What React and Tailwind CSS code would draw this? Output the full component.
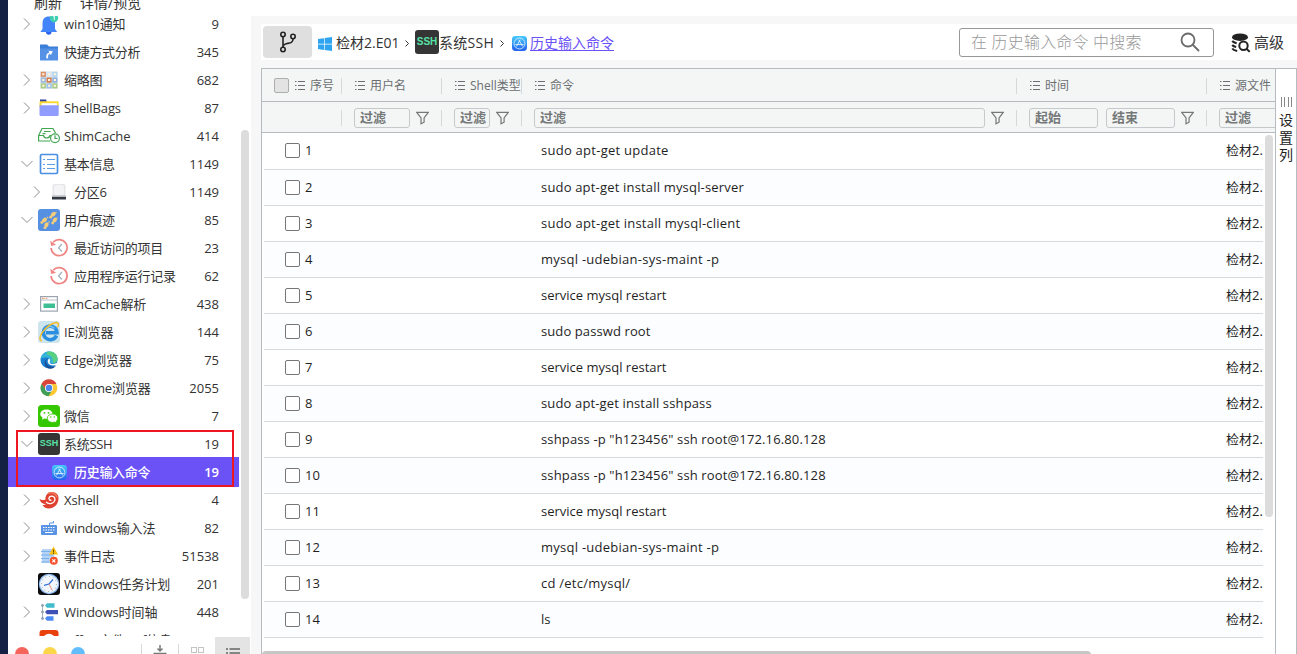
import React from 'react';

const SSH = ({ className }) => (
  <span className={"flex items-center justify-center rounded-[3px] bg-[#353535] pb-px font-['Liberation_Sans',sans-serif] font-bold text-[#57e3a6] " + className}>SSH</span>
);

const Svg = ({ s = 22, children }) => (
  <svg width={s} height={s} viewBox="0 0 22 22" fill="none">{children}</svg>
);

const AppStore = ({ s }) => (
  <Svg s={s}>
    <defs>
      <linearGradient id="store" x1="0" y1="0" x2="0" y2="1">
        <stop offset="0" stopColor="#45cbfa" />
        <stop offset="1" stopColor="#2560ee" />
      </linearGradient>
    </defs>
    <rect width="22" height="22" rx="5" fill="url(#store)" />
    <circle cx="11" cy="11" r="8" stroke="#e4f4ff" strokeWidth="1.200" />
    <path d="M11.8 6L7 14.5M10.2 6l5 8.5M5.5 12.5h11" stroke="#e4f4ff" strokeWidth="1.300" strokeLinecap="round" />
  </Svg>
);

const icons = {
  bell: (
    <Svg>
      <path d="M4.500 16V10.500C4.500 6 7 3.500 10.500 3.500s6.500 2.500 6.500 7V16l2.200 3H2.300z" fill="#4285fb" />
      <path d="M8 19h5.500a2.700 2.700 0 0 1-5.500 0z" fill="#2e62f4" />
      <circle cx="16" cy="5" r="4.200" fill="#3fcfb0" />
      <path d="M15.300 3.800l1-.8v4" stroke="#fff" strokeWidth=".9" />
    </Svg>
  ),
  shortcut: (
    <Svg>
      <path d="M2 3.500h7l2 2h9v3H2z" fill="#3c7fd8" />
      <rect x="2" y="7.500" width="18" height="12" fill="#5591e5" />
      <path d="M8.500 17.500c-.8-3.500.5-5.500 2.800-5.800l-.8-2 4.300.6-2 4-.7-1.500c-1.800.5-2.500 2.200-1.800 4.500z" fill="#fff" />
    </Svg>
  ),
  thumbs: (
    <Svg>
      <rect x="2.500" y="2.500" width="17" height="17" fill="#dbe7f0" />
      {[['#d98f68', '#d8e6f3', '#b5d5f0'], ['#9db8dd', '#d07d51', '#8fb0df'], ['#a9cc88', '#9fc0e8', '#a9cc88']].map((r, y) =>
        r.map((c, x) => (
          <g key={x + '-' + y}>
            <rect x={2.7 + x * 5.8} y={2.7 + y * 5.8} width="5.200" height="5.200" fill={c} />
            <rect x={4.2 + x * 5.8} y={4.2 + y * 5.8} width="2.200" height="2" fill="#fff3da" />
          </g>
        ))
      )}
    </Svg>
  ),
  folder: (
    <Svg>
      <path d="M2 2.500h6l1 2.500H2z" fill="#2f3f9e" />
      <rect x="1.500" y="4.200" width="19" height="6" rx="1" fill="#fdd835" />
      <path d="M3.500 6.200h15.500v3H3.500z" fill="#fff" />
      <path d="M1.500 8.200h19.200v9.300a1.500 1.500 0 0 1-1.500 1.500H3a1.500 1.500 0 0 1-1.500-1.500z" fill="#919cff" />
    </Svg>
  ),
  shim: (
    <Svg>
      <path d="M.6 10.500L4 3.500h11l2.500 4.500M.6 10.500v5.500h11.500M.6 10.500H5.500c.5 2 1.500 2.500 3 2.500 1.800 0 3-.5 3.500-2.500h1M6 6.500h6.500M4.500 8.700h3" stroke="#43a653" strokeWidth="1.200" />
      <circle cx="17" cy="13.200" r="4.400" stroke="#43a653" strokeWidth="1.200" />
      <path d="M17 10.200v3.300h2.500" stroke="#43a653" strokeWidth="1.200" />
    </Svg>
  ),
  info: (
    <Svg>
      <rect x="2.500" y="1.500" width="17" height="19" rx="1.200" fill="#fff" stroke="#4a90e2" strokeWidth="1.700" />
      <path d="M5 6.500h2M5 11.500h2M5 15.500h2M9 6.500h8M9 11.500h8M9 15.500h8" stroke="#5c9ee8" strokeWidth="1.100" />
    </Svg>
  ),
  disk: (
    <Svg>
      <rect x="4.500" y="3" width="13" height="14" rx="2" fill="#e6e6e9" />
      <rect x="6" y="4" width="10" height="10" rx="2" fill="#f4f4f6" />
      <path d="M4 15h14v3.500H4z" fill="#333841" />
      <path d="M4 14.500h14v1.500H4z" fill="#b6b8bd" />
    </Svg>
  ),
  feet: (
    <Svg>
      <rect width="22" height="22" rx="3" fill="#5590e3" />
      <g fill="#f5cd79">
        <ellipse cx="6.500" cy="11" rx="2.800" ry="2.100" transform="rotate(-40 6.500 11)" />
        <ellipse cx="3.800" cy="13.500" rx="1.500" ry="1.300" />
        <ellipse cx="8.500" cy="15.800" rx="2.600" ry="2" transform="rotate(-60 8.500 15.800)" />
        <ellipse cx="7" cy="18.700" rx="1.600" ry="1.300" />
        <ellipse cx="15.300" cy="5.200" rx="2.800" ry="2" transform="rotate(-40 15.300 5.200)" />
        <ellipse cx="12.700" cy="8" rx="1.500" ry="1.500" />
        <ellipse cx="16.800" cy="11" rx="2.600" ry="1.900" transform="rotate(-50 16.800 11)" />
        <ellipse cx="14.700" cy="14" rx="1.400" ry="1.400" />
        <circle cx="9.500" cy="8.500" r=".8" /><circle cx="11" cy="13" r=".8" /><circle cx="18" cy="3.500" r=".7" /><circle cx="19" cy="9" r=".7" />
      </g>
    </Svg>
  ),
  clock: (
    <Svg>
      <path d="M5.200 5.200A8 8 0 1 1 3.100 11" stroke="#ee8583" strokeWidth="1.700" />
      <path d="M2.200 3.800l1 5.200 4.800-1.200z" fill="#ee8583" />
      <path d="M13.800 7l-3.300 4 3.500 3.500" stroke="#9fb2bd" strokeWidth="1.200" />
    </Svg>
  ),
  window: (
    <Svg>
      <rect x="2.600" y="3.600" width="16.800" height="14.500" fill="#fff" stroke="#9aa5b0" strokeWidth="1.200" />
      <path d="M3 7h16" stroke="#b6bec6" />
      <path d="M4 5.300h1.500" stroke="#ef6c5b" /><path d="M6 5.300h1.500" stroke="#f7b84a" /><path d="M8 5.300h1.500" stroke="#f1a097" />
      <rect x="5.500" y="10.500" width="11.500" height="4.500" fill="#3ebf93" />
    </Svg>
  ),
  ie: (
    <Svg>
      <rect width="22" height="22" rx="3" fill="#cfe5ee" />
      <path d="M18.500 14.500A6.800 6.800 0 1 1 19 11.800H8" stroke="#2b8ede" strokeWidth="3.600" />
      <path d="M7 9.500a5.500 5.500 0 0 1 9.500-2" stroke="#6ec3f3" strokeWidth="1.500" />
      <path d="M4 20C.2 19.500 2 13 7.500 7.500 12 3 18.500.3 20 2.300c.8 1 .3 2.500-.5 4" stroke="#f4bd2d" strokeWidth="1.500" />
    </Svg>
  ),
  edge: (
    <Svg>
      <circle cx="11" cy="11" r="8.500" fill="#1b7fd0" />
      <path d="M2.500 10C3.500 5 7 2.500 11 2.500c5 0 8.500 3.500 8.500 7.500 0 3-2.500 4.500-5 4.500-2 0-3-1-2.500-2 .8-2-1-4-3.500-4S3.500 9 2.500 10z" fill="#35b4d6" />
      <path d="M12 2.500c4.500 0 7.500 3.500 7.500 7 0 2.500-2 4.500-4.500 4.500 0-5-1.500-8-7-9 1-1.500 2.500-2.500 4-2.500z" fill="#59cf82" />
      <path d="M9 9.500c-2.500 3 0 8.500 5.500 8 2 0 3-.5 4-1.500-2 3.500-5.500 4.500-9 3-3.500-2-4-7-.5-9.500z" fill="#174f9b" />
      <path d="M11 9.500c1.500 1 1 2 .8 3-.5 1.300.8 2.700 3 2.500 2 0 3.500-.8 4.500-1.500l-.5 2c-3 2-8.500 1-9-2.500-.1-1.500.3-2.800 1.200-3.500z" fill="#fff" />
    </Svg>
  ),
  chrome: (
    <Svg>
      <circle cx="11" cy="11" r="8.300" fill="#fbc834" />
      <path d="M3.500 7A8.300 8.300 0 0 1 18.500 7H11L8 13z" fill="#d8453a" />
      <path d="M3.500 7A8.300 8.300 0 0 0 10.500 19.300L14 13.500 8 13z" fill="#3f9d58" />
      <circle cx="11" cy="11" r="4" fill="#fff" /><circle cx="11" cy="11" r="3.200" fill="#4a86ee" />
    </Svg>
  ),
  wechat: (
    <Svg>
      <rect width="22" height="22" rx="3.500" fill="#35c700" />
      <path d="M8.500 4.500c3.500 0 6 2 6 4.700s-2.500 4.600-6 4.600c-.8 0-1.500-.1-2.200-.3L4 14.700l.6-2.200C3.100 11.500 2.300 10.500 2.300 9.200c0-2.700 2.700-4.700 6.200-4.700z" fill="#fff" />
      <path d="M14.500 9c3 0 5.300 1.800 5.300 4.200 0 1.200-.6 2.200-1.600 3l.5 1.900-2-1c-.7.200-1.400.3-2.200.3-3 0-5.200-1.800-5.200-4.200S11.500 9 14.500 9z" fill="#fff" stroke="#35c700" strokeWidth=".8" />
      <g fill="#35c700"><circle cx="6.500" cy="7.800" r=".9" /><circle cx="10.500" cy="7.800" r=".9" /><circle cx="12.800" cy="12" r=".7" /><circle cx="16.300" cy="12" r=".7" /></g>
    </Svg>
  ),
  ssh: <SSH className="h-[22px] w-[22px] text-[9px]" />,
  store: <AppStore s={15} />,
  xshell: (
    <Svg>
      <path d="M1.500 10c2 1.500 4 1.200 6 .5C7 6.500 10 3 14 3c4 0 7 3 6.500 7-.5 6-5 9.500-9.500 9.500-3 0-5-1-6.500-3.500 1.500.3 2.500 0 3.500-.7C4.500 15 2 13 1.500 10z" fill="#e0402f" />
      <path d="M8 13c3 3 8.500 1.500 9-2.500.2-3-3.500-4.500-5.500-2.500-1.500 1.800.3 4 2 3" stroke="#fff" strokeWidth="1.300" />
      <path d="M10 4.500c4-2 8 0 9 4" stroke="#f1795a" strokeWidth="1.500" />
    </Svg>
  ),
  keyboard: (
    <Svg>
      <rect x="3" y="8" width="16" height="10" rx="1" fill="#5893e4" />
      <path d="M11.500 8V6h4V4" stroke="#5893e4" />
      <path d="M5 10.500h12.500M5 13h12.500" stroke="#fff" strokeDasharray="1.500 1" /><path d="M7 15.500h8" stroke="#fff" />
    </Svg>
  ),
  events: (
    <Svg>
      <path d="M4 4h12v14H4z" fill="#b4d3f6" />
      <path d="M3 6.500h10M3 10h12M3 13.500h8M3 17h8" stroke="#72abea" strokeWidth=".9" />
      <path d="M15.500 1.500l4.500 8h-9z" fill="#fbbf12" /><path d="M15.500 4.500v3M15.500 8v1" stroke="#6b4c00" />
      <circle cx="15.800" cy="15.800" r="4" fill="#f4512c" /><path d="M14.300 14.300l3 3m0-3l-3 3" stroke="#fff" strokeWidth="1.200" />
    </Svg>
  ),
  task: (
    <Svg>
      <rect width="22" height="22" rx="3" fill="#0b0c10" />
      <circle cx="11" cy="11" r="9.600" fill="#f1f6fc" stroke="#8fbcf4" strokeWidth="1.200" />
      <circle cx="11" cy="11" r="7.500" stroke="#8d9fb7" strokeDasharray="1 2.900" />
      <path d="M6 12.300L11 11l4-4.500" stroke="#2f6fd6" strokeWidth="1.200" /><path d="M11 11l3 6" stroke="#e5745c" strokeWidth=".8" />
    </Svg>
  ),
  timeline: (
    <Svg>
      <path d="M4.500 4v14" stroke="#a7b4c2" />
      <g fill="#8fa1b3"><circle cx="4.500" cy="4.500" r="1.400" /><circle cx="4.500" cy="11" r="1.400" /><circle cx="4.500" cy="17.500" r="1.400" /></g>
      <path d="M7 4.500l2-2.300h7.500v4.600H9z" fill="#41bccd" /><path d="M7 11l2-2h11v4.300H9z" fill="#3f51b5" /><path d="M7 17.500l2-2.300h6.500v4.600H9z" fill="#4c8bf5" />
    </Svg>
  ),
  office: (
    <Svg>
      <rect x="1.500" y="1" width="19" height="19" rx="3" fill="#e8410b" /><circle cx="11" cy="11" r="5" stroke="#fff" strokeWidth="2.500" />
    </Svg>
  ),
};

const tree = [
  ['bell', 'win10通知', 9, '>', 0],
  ['shortcut', '快捷方式分析', 345, '', 0],
  ['thumbs', '缩略图', 682, '>', 0],
  ['folder', 'ShellBags', 87, '>', 0],
  ['shim', 'ShimCache', 414, '', 0],
  ['info', '基本信息', 1149, 'v', 0],
  ['disk', '分区6', 1149, '>', 1],
  ['feet', '用户痕迹', 85, 'v', 0],
  ['clock', '最近访问的项目', 23, '', 1],
  ['clock', '应用程序运行记录', 62, '', 1],
  ['window', 'AmCache解析', 438, '>', 0],
  ['ie', 'IE浏览器', 144, '>', 0],
  ['edge', 'Edge浏览器', 75, '>', 0],
  ['chrome', 'Chrome浏览器', 2055, '>', 0],
  ['wechat', '微信', 7, '>', 0],
  ['ssh', '系统SSH', 19, 'v', 0],
  ['store', '历史输入命令', 19, '', 1],
  ['xshell', 'Xshell', 4, '>', 0],
  ['keyboard', 'windows输入法', 82, '>', 0],
  ['events', '事件日志', 51538, '>', 0],
  ['task', 'Windows任务计划', 201, '', 0],
  ['timeline', 'Windows时间轴', 448, '>', 0],
  ['office', 'Office文件Exif信息', '', '', 0],
];

function TreeRow({ row: [icon, label, count, arrow, level] }) {
  const selected = icon === 'store';
  const latin = /^[A-Za-z]{2}/.test(label);
  return (
    <div className={'flex w-[231px] shrink-0 items-center pr-5 ' + (level ? 'pl-[21px] ' : 'pl-[11px] ') + (selected ? '-my-px h-[30px] bg-[#6b52f7] font-semibold text-white' : 'h-7 text-[#333]')}>
      <span className="mr-[3px] flex w-4 justify-center">
        {arrow === '>' && <svg width="8" height="12" viewBox="0 0 8 12" fill="none" stroke="#8c8c8c"><path d="M1 .5L6.500 6 1 11.500" /></svg>}
        {arrow === 'v' && <svg width="12" height="8" viewBox="0 0 12 8" fill="none" stroke="#8c8c8c"><path d="M.5 1L6 6.500 11.500 1" /></svg>}
      </span>
      <span className="mr-1 flex w-[22px] shrink-0 justify-center">{icons[icon]}</span>
      <span className={'whitespace-nowrap pt-[2px] ' + (selected ? 'font-medium ' : '') + (latin ? 'tracking-[-0.1px]' : 'tracking-[-0.3px]')}>{label}</span>
      <span className="ml-auto pt-[2px]">{count}</span>
    </div>
  );
}

const ListIcon = () => (
  <svg className="mr-[5px] shrink-0" width="10" height="9" viewBox="0 0 10 9" stroke="#6b6f72"><path d="M0 .5h1.500M3 .5h7M0 4.500h1.500M3 4.500h7M0 8.500h1.500M3 8.500h7" /></svg>
);
const Funnel = () => (
  <svg className="ml-[6px] shrink-0" width="13" height="14" viewBox="0 0 14 14" fill="none" stroke="#777" strokeWidth="1.300"><path d="M.8 1h12.400L8.700 7v4.500L5.400 13.300V7z" /></svg>
);
const Box = ({ w, children }) => (
  <span className={'flex h-5 shrink-0 items-center overflow-hidden rounded-[3px] border border-[#c6c9cb] pl-[5px] text-[13px] font-semibold text-[#757878] ' + w}>{children}</span>
);
const Sep = ({ w, children }) => (
  <div className={'flex shrink-0 items-center ' + w}>{children}<span className="ml-auto h-4 w-px bg-[#d5d8da]" /></div>
);

const commands = [
  ['sudo apt-get update', 'tracking-[0.26px]'],
  ['sudo apt-get install mysql-server', 'tracking-[0.18px]'],
  ['sudo apt-get install mysql-client', 'tracking-[0.23px]'],
  ['mysql -udebian-sys-maint -p', 'tracking-[0.26px]'],
  ['service mysql restart', ''],
  ['sudo passwd root', 'tracking-[0.1px]'],
  ['service mysql restart', ''],
  ['sudo apt-get install sshpass', 'tracking-[0.14px]'],
  ['sshpass -p "h123456" ssh root@172.16.80.128', 'tracking-[0.14px]'],
  ['sshpass -p "h123456" ssh root@172.16.80.128', 'tracking-[0.14px]'],
  ['service mysql restart', ''],
  ['mysql -udebian-sys-maint -p', 'tracking-[0.26px]'],
  ['cd /etc/mysql/', 'tracking-[0.24px]'],
  ['ls', ''],
];

function Sidebar() {
  return (
    <aside className="relative flex w-[243px] shrink-0 flex-col bg-white">
      <div className="flex h-4 shrink-0 gap-[18px] overflow-hidden pl-[26px] text-[14px] leading-[20px] text-[#333]">
        <span className="-mt-[7px]">刷新</span>
        <span className="-mt-[7px]">详情/预览</span>
      </div>
      <div className="flex h-[620px] shrink-0 justify-between overflow-hidden">
        <div className="-mt-[6px] flex flex-col">
          {tree.map((r) => <TreeRow key={r[1]} row={r} />)}
        </div>
        <div className="mr-[2px] mt-[114px] h-[469px] w-2 rounded-full bg-[#dcdcdc]" />
      </div>
      <div className="flex h-[18px] shrink-0 overflow-hidden">
        <div className="flex gap-[14px] pl-[7px] pt-[11px]">
          <i className="h-[14px] w-[14px] rounded-full bg-[#f5655b]" />
          <i className="h-[14px] w-[14px] rounded-full bg-[#fbd54a]" />
          <i className="h-[14px] w-[14px] rounded-full bg-[#63bdfb]" />
        </div>
        <div className="ml-[56px] mt-2 flex w-[38px] justify-center border-x border-[#d8d8d8]">
          <svg width="14" height="12" viewBox="0 0 14 12" fill="none" stroke="#777" strokeWidth="1.500"><path d="M7 1v6M4.500 4.500L7 7l2.500-2.500M.5 9.500h13" /></svg>
        </div>
        <div className="mt-2 flex w-9 justify-center pt-[3px]">
          <svg width="13" height="12" viewBox="0 0 13 12" fill="none" stroke="#c4c4c4"><rect x=".5" y=".5" width="5" height="5" /><rect x="7.500" y=".5" width="5" height="5" /><rect x=".5" y="7.500" width="5" height="5" /><rect x="7.500" y="7.500" width="5" height="5" /></svg>
        </div>
        <div className="mt-px flex w-[35px] justify-center bg-[#e4e4e4] pt-[11px]">
          <svg width="15" height="12" viewBox="0 0 15 12" stroke="#666" strokeWidth="1.500"><path d="M1 1h2M4.500 1H15M1 5h2M4.500 5H15" /></svg>
        </div>
      </div>
      <div className="absolute left-2 top-[430px] h-[57px] w-[218px] border-2 border-[#ee1620]" />
    </aside>
  );
}

const Crumb = () => (
  <svg className="ml-[6px] mt-[2px] shrink-0" width="4" height="7" viewBox="0 0 4 7" fill="none" stroke="#333"><path d="M.5.5l3 3-3 3" /></svg>
);

function Toolbar() {
  return (
    <div className="flex h-9 shrink-0 items-center bg-white pl-[2px] text-[14px] text-[#333]">
      <span className="flex h-8 w-[49px] items-center justify-center rounded bg-[#dfdfdf]">
        <svg width="18" height="22" viewBox="0 0 18 22" fill="none" stroke="#222" strokeWidth="1.600"><circle cx="4" cy="3.500" r="2.200" /><circle cx="4" cy="18.500" r="2.200" /><circle cx="14" cy="5.500" r="2.200" /><path d="M4 6v10.300M14 8c0 4-3 4-6 4.500-2 .5-4 1-4 3.500" /></svg>
      </span>
      <svg className="ml-[6px] mt-[3px]" width="14" height="14" viewBox="0 0 14 14" fill="#2fa4f0"><path d="M0 2l6-.8v5.500H0zM6.700 1.100L14 0v6.700H6.700zM0 7.400h6v5.500L0 12zM6.700 7.400H14V14l-7.300-1z" /></svg>
      <span className="ml-[4px] w-[63px] whitespace-nowrap">检材2.E01</span>
      <Crumb />
      <SSH className="ml-[6px] h-6 w-6 text-[10px]" />
      <span className="w-[55px] whitespace-nowrap tracking-[0.3px]">系统SSH</span>
      <Crumb />
      <span className="ml-[8px] mr-[3px] mt-[2px]"><AppStore s={15} /></span>
      <span className="text-[#6b52f7] underline underline-offset-2">历史输入命令</span>
      <div className="ml-auto flex h-[29px] w-[255px] items-center justify-between rounded-[3px] border border-[#979797] pl-[11px] pr-[13px] text-[16px] text-[#999]">
        <span className="whitespace-nowrap font-light tracking-[0.2px]">在 历史输入命令 中搜索</span>
        <svg width="20" height="20" viewBox="0 0 20 20" fill="none" stroke="#6b6b6b" strokeWidth="1.800"><circle cx="8" cy="8" r="6.500" /><path d="M12.500 12.500l6.500 6.500" /></svg>
      </div>
      <svg className="ml-[17px] mt-[2px]" width="20" height="20" viewBox="0 0 20 20" fill="none">
        <ellipse cx="9" cy="4.200" rx="8" ry="3.700" fill="#222" />
        <path d="M1.200 8c1 1.200 2.500 1.800 4.500 2.200M1.200 12c1 1.200 2 1.600 4 2M1.200 15.500c1 1.500 2.500 2 5 2.500" stroke="#222" strokeWidth="2" />
        <circle cx="12.500" cy="12.700" r="4.200" stroke="#222" strokeWidth="2" /><path d="M15.500 15.700l3.200 3.200" stroke="#222" strokeWidth="2" />
      </svg>
      <span className="ml-[3px] mr-[12px] w-[31px] whitespace-nowrap text-[15px]">高级</span>
    </div>
  );
}

function Grid() {
  return (
    <div className="mt-2 flex min-h-0 flex-1 border-l border-t border-[#b6bbc0] bg-white">
      <div className="flex w-[1013px] shrink-0 flex-col overflow-hidden">
        <div className="flex h-[33px] shrink-0 border-b border-[#b6bbc0] bg-[#f4f6f6] pt-px text-[12px] text-[#6b6f72]">
          <Sep w="w-20 pl-3">
            <i className="mr-[6px] h-[15px] w-[15px] rounded-[2px] border border-[#adadad] bg-[#e3e3e3]" />
            <ListIcon />序号
          </Sep>
          <Sep w="w-[100px] pl-[13px]"><ListIcon />用户名</Sep>
          <Sep w="w-20 pl-[13px]"><ListIcon /><span className="w-[51px] whitespace-nowrap">Shell类型</span></Sep>
          <Sep w="w-[495px] pl-[13px]"><ListIcon />命令</Sep>
          <Sep w="w-[190px] pl-[13px]"><ListIcon />时间</Sep>
          <div className="flex shrink-0 items-center pl-[13px]"><ListIcon /><span className="whitespace-nowrap">源文件</span></div>
        </div>
        <div className="flex h-[31px] shrink-0 border-b border-[#b6bbc0] bg-[#f4f6f6] pt-[2px]">
          <Sep w="w-20" />
          <Sep w="w-[100px] pl-3"><Box w="w-14">过滤</Box><Funnel /></Sep>
          <Sep w="w-20 pl-3"><Box w="w-9">过滤</Box><Funnel /></Sep>
          <Sep w="w-[495px] pl-3"><Box w="w-[451px]">过滤</Box><Funnel /></Sep>
          <Sep w="w-[190px] pl-3"><Box w="w-[69px]">起始</Box><span className="w-2 shrink-0" /><Box w="w-[69px]">结束</Box><Funnel /></Sep>
          <div className="flex shrink-0 items-center pl-3"><Box w="w-24">过滤</Box></div>
        </div>
        <div className="flex h-[518px] shrink-0">
          <div className="ml-[2px] w-[999px] overflow-hidden text-[13px] text-[#1f1f1f]">
            {commands.map(([c, tracking], i) => (
              <div key={i} className={'flex items-center border-b border-[#d7dadd] pl-[21px] ' + (i === 0 ? 'h-[37px] pb-px ' : 'h-9 ') + (i % 2 ? 'bg-[#fcfdfe]' : 'bg-white')}>
                <i className="h-[15px] w-[15px] shrink-0 rounded-[2px] border-[1.500px] border-[#767676] bg-white" />
                <span className="ml-[5px] w-[236px] shrink-0">{i + 1}</span>
                <span className={'w-[685px] shrink-0 ' + tracking}>{c}</span>
                <span className="shrink-0 whitespace-nowrap">检材2.E01</span>
              </div>
            ))}
          </div>
          <div className="ml-[2px] mt-[2px] h-[382px] w-2 rounded-full bg-[#dcdcdc]" />
        </div>
        <div className="h-2 w-[829px] shrink-0 rounded bg-[#c6c6c6]" />
      </div>
      <div className="flex w-[22px] shrink-0 flex-col items-center border-x border-[#b6bbc0] bg-white pt-[28px] text-[14px] leading-[17.500px] text-[#222]">
        <svg width="11" height="10" viewBox="0 0 11 10" stroke="#888"><path d="M.5 0v10M3.500 0v10M7.500 0v10M10.500 0v10" /></svg>
        <span className="mt-[4px]">设</span><span>置</span><span>列</span>
      </div>
    </div>
  );
}

export default function App() {
  return (
    <div className="flex h-[654px] w-[1297px] overflow-hidden bg-white font-['Open_Sans','Noto_Sans_CJK_SC',sans-serif] text-[13px]">
      <div className="w-2 shrink-0 bg-[#142044]" />
      <Sidebar />
      <main className="mt-4 flex min-w-0 flex-1 flex-col bg-[#f7f7f7] pl-[10px] pt-2">
        <Toolbar />
        <Grid />
      </main>
    </div>
  );
}
